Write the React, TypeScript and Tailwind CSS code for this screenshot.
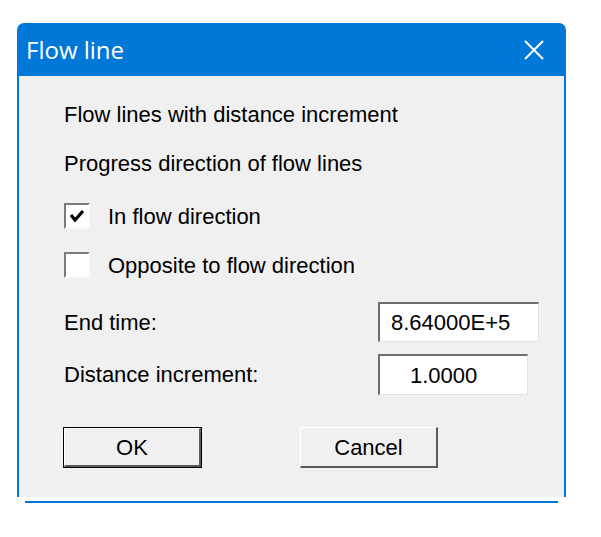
import React from "react";

function Check({ checked }: { checked: boolean }) {
  return (
    <div className="w-[26px] h-[26px] border-t-2 border-l-2 border-t-[#7a7a7a] border-l-[#7a7a7a] border-b-2 border-r-2 border-b-[#fafafa] border-r-[#fafafa] bg-white flex items-center justify-center">
      {checked && (
        <svg width="18" height="18" viewBox="0 0 18 18">
          <polyline points="3,8 7,13 15,4" fill="none" stroke="#000" strokeWidth="3.2" />
        </svg>
      )}
    </div>
  );
}

export default function App() {
  const font = { fontFamily: '"Liberation Sans", Arial, sans-serif' };
  return (
    <div className="w-[601px] h-[537px] bg-white pt-[23px] pl-[17px]" style={font}>
      <div className="w-[549px]">
        <div className="h-[53px] bg-[#0078d7] rounded-t-[7px] flex items-center justify-between pl-[9px] pr-[22px]">
          <span className="text-white text-[24px] leading-none" style={{ fontFamily: '"Open Sans", "Noto Sans", sans-serif' }}>
            Flow line
          </span>
          <svg width="20" height="20" viewBox="0 0 20 20">
            <line x1="1" y1="1" x2="19" y2="19" stroke="#fff" strokeWidth="2" />
            <line x1="19" y1="1" x2="1" y2="19" stroke="#fff" strokeWidth="2" />
          </svg>
        </div>
        <div className="h-[421px] border-x-2 border-[#0078d7] bg-[#f0f0f0] pt-[24px] pl-[45px] text-[22px] text-black">
          <div className="h-[28px] flex items-center">Flow lines with distance increment</div>
          <div className="h-[28px] mt-[21px] flex items-center">Progress direction of flow lines</div>
          <div className="h-[26px] mt-[26px] flex items-center">
            <Check checked={true} />
            <span className="ml-[18px]">In flow direction</span>
          </div>
          <div className="h-[26px] mt-[23px] flex items-center">
            <Check checked={false} />
            <span className="ml-[18px]">Opposite to flow direction</span>
          </div>
          <div className="h-[40px] mt-[24px] flex items-center">
            <span className="w-[314px]">End time:</span>
            <div className="w-[161px] h-[40px] bg-white border-t-2 border-l-2 border-t-[#6d6d6d] border-l-[#6d6d6d] border-b border-r border-b-[#e3e3e3] border-r-[#e3e3e3] flex items-center pl-[11px]">
              8.64000E+5
            </div>
          </div>
          <div className="h-[41px] mt-[12px] flex items-center">
            <span className="w-[314px]">Distance increment:</span>
            <div className="w-[150px] h-[41px] bg-white border-t-2 border-l-2 border-t-[#6d6d6d] border-l-[#6d6d6d] border-b border-r border-b-[#e3e3e3] border-r-[#e3e3e3] flex items-center pl-[30px]">
              1.0000
            </div>
          </div>
          <div className="h-[41px] mt-[32px] flex items-center">
            <div className="w-[139px] h-[41px] border border-black -ml-px">
              <div className="w-full h-full border-t border-l border-t-white border-l-white border-b-2 border-r-2 border-b-[#5a5a5a] border-r-[#5a5a5a] flex items-center justify-center">
                OK
              </div>
            </div>
            <div className="ml-[98px] w-[138px] h-[41px] border-t border-l border-t-white border-l-white border-b-2 border-r-2 border-b-[#5a5a5a] border-r-[#5a5a5a] flex items-center justify-center">
              Cancel
            </div>
          </div>
        </div>
        <div className="h-[4px] bg-white" />
        <div className="ml-[8px] w-[533px] h-[2px] bg-[#0078d7]" />
      </div>
    </div>
  );
}
